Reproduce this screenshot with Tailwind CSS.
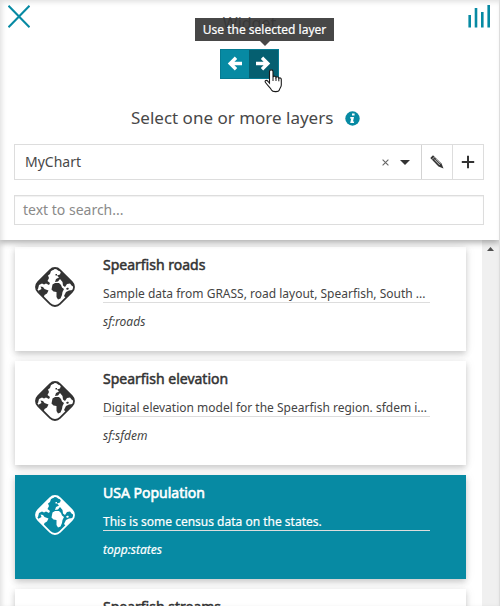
<!DOCTYPE html>
<html lang="en">
<head>
<meta charset="utf-8">
<title>Widget</title>
<script src="https://cdn.jsdelivr.net/npm/@tailwindcss/browser@4"></script>
</head>
<body class="relative h-[606px] w-[500px] overflow-hidden bg-white font-['Noto_Sans','Open_Sans',sans-serif] text-[#333]">
<svg class="absolute h-0 w-0">
  <clipPath id="diamond"><rect x="4.500" y="4.500" width="31" height="31" rx="7" transform="rotate(45 20 20)"/></clipPath>
  <symbol id="globe" viewBox="0 0 40 40">
    <rect x="4.500" y="4.500" width="31" height="31" rx="7" transform="rotate(45 20 20)" fill="none" stroke="currentColor" stroke-width="1.8"/>
    <g clip-path="url(#diamond)" fill="currentColor">
      <path d="M0 18 0 0H21L19 2.500 16 4 15 7 13 8.500 14 11 12.500 14 15 16 14 18 11 16.500 9 17.500 7 16.500 4 18 3 22 0 23Z"/>
      <path d="M20 0H40V20L37 19 35 16.500 32 17 30 20 28 18.500 27.500 15 25 12 23 14.500 20 15 21 12 24 10.500 22 8.500 25 7.500 26 4.500 23 3.500Z"/>
      <path d="M17.500 17.500 20 16 24 16 26 18 27 20.500 29 22 27.500 25 27 28 25.500 31.500 23 32.500 21.500 30 21.500 25 18.500 24.500 16.500 22.500Z"/>
      <path d="M3 24 6.500 22 5.500 19.500 8 20 9.500 22 13.500 23.500 12 26.500 9.500 28 8.500 31Z"/>
      <path d="M31 25 34 23.500 38 23 31 31 29 29Z"/>
      <path d="M20.500 7h1.500v1.500h-1.500zM31 21.500l2-1 1 1.500-2 1z"/>
    </g>
  </symbol>
</svg>
<header class="relative z-10 h-60 w-[499px] bg-white px-[14px] shadow-[0_3px_6px_rgba(0,0,0,.3)]">
  <div class="-mx-[6px] flex h-[49px] justify-between pt-[5px]">
    <svg class="h-6 w-[22px] text-[#078aa3]" viewBox="0 0 22 24"><path d="M.5 .8 21.5 22.2M21.5 .8 .5 22.2" stroke="currentColor" stroke-width="2.1"/></svg>
    <span class="ml-[2px] mt-[4px] text-[16px] leading-7 text-[#666]">Widget</span>
    <svg class="h-6 w-6 text-[#078aa3]" viewBox="0 0 24 24"><path d="M2.700 10v12.500M9 3v19.500M15.300 7v15.500M21.700 0v22.500" stroke="currentColor" stroke-width="2.6"/></svg>
  </div>
  <div class="ml-[206px] flex h-[30px] w-[59px] border border-[#067b92] text-white">
    <button class="flex w-7 items-center justify-center bg-[#078aa3]"><svg class="h-4 w-4" viewBox="0 0 16 16"><path d="M15 7.500H4M9 1.800 3.200 7.500l5.800 5.700" fill="none" stroke="currentColor" stroke-width="3.4"/></svg></button>
    <button class="flex w-[29px] items-center justify-center bg-[#055f70]"><svg class="h-4 w-4" viewBox="0 0 16 16"><path d="M0 7.500h11M6 1.800l5.800 5.700L6 13.200" fill="none" stroke="currentColor" stroke-width="3.4"/></svg></button>
  </div>
  <div class="mt-[25px] flex h-7 items-center pl-[117px]">
    <h1 class="whitespace-nowrap text-[17px] leading-7 text-[#484848]">Select one or more layers</h1>
    <svg class="ml-3 h-[15px] w-[15px]" viewBox="0 0 15 15"><circle cx="7.5" cy="7.5" r="7.2" fill="#078aa3"/><path d="M7 2.5h2.6v2H7zM5.400 6H9l-1 4.500h1.200l-.3 1.500H5.200l1-4.500H5z" fill="#fff"/></svg>
  </div>
  <div class="mt-3 flex h-9 w-[470px] border border-[#ddd]">
    <div class="flex w-[407px] items-center border-r border-[#d3d3d3] pl-[10px]">
      <span class="grow text-sm text-[#484848]">MyChart</span>
      <svg class="mr-[11px] h-[7px] w-[7px] text-[#666]" viewBox="0 0 7 7"><path d="M.6 .6 6.4 6.4M6.4 .6 .6 6.4" stroke="currentColor" stroke-width="1.1"/></svg>
      <svg class="mr-[11px] h-[5px] w-[10px]" viewBox="0 0 10 5"><path d="M0 0h10L5 5z" fill="#333"/></svg>
    </div>
    <button class="flex w-[31px] items-center justify-center border-r border-[#ddd]"><svg class="h-[14px] w-[14px]" viewBox="0 0 14 14"><path d="M.3 3 3 .3 11.500 8.500 13.500 13.500 8.500 11.500z" fill="#333"/><path d="M2 4.500 4.500 2M4.300 4.500l5.500 5.500M5.500 3.700l5 5" stroke="#fff" stroke-width=".7"/></svg></button>
    <button class="flex grow items-center justify-center"><svg class="h-[14px] w-[14px]" viewBox="0 0 14 14"><path d="M7 .8v12.400M.8 7h12.400" stroke="#333" stroke-width="2"/></svg></button>
  </div>
  <div class="mt-[15px] flex h-[30px] w-[470px] items-center border border-[#ddd] pl-2 text-sm text-[#8a8a8a] shadow-[inset_0_1px_1px_rgba(0,0,0,.06)]">text to search...</div>
  <div class="absolute left-[195px] top-[18px] flex h-[23px] w-[139px] items-center justify-center whitespace-nowrap bg-[#333]/90 text-xs text-white [-webkit-text-stroke:.2px_#fff]">Use the selected layer</div>
  <svg class="absolute left-[260px] top-[41px] h-[5px] w-[10px]" viewBox="0 0 10 5"><path d="M0 0h10L5 5z" fill="#474747"/></svg>
  <svg class="absolute left-[264px] top-[69px] h-[24px] w-[18px]" viewBox="0 0 18 24"><path d="M5.500 14V2.500C5.500.3 9 .3 9 2.500V8c.5-1.300 2.800-1 3 .5.7-1.200 2.700-.7 2.800.8 1-1 2.500-.2 2.500 1.200V16c0 2-1.500 3.200-1.800 4.500-.3 2.800-7 2.800-8 .5C6.500 18.500 3.500 16.500 1.500 13.500.2 11.500 2.500 10.500 4 12.300z" fill="#fff" stroke="#191919" stroke-width="1.1"/><path d="M9 8v4M12 8.500v3.500M14.800 9.300v3" stroke="#191919"/></svg>
</header>
<main class="flex h-[366px] w-[499px] overflow-hidden">
  <div class="flex w-[482px] flex-col gap-[10px] bg-white pl-[15px] pt-[7px]">
    <article class="flex h-[104px] w-[451px] shrink-0 bg-white pl-5 shadow-[0_3px_6px_rgba(0,0,0,.18),0_0_12px_rgba(0,0,0,.06)]">
      <svg class="mt-5 h-10 w-10"><use href="#globe"/></svg>
      <div class="ml-7 w-[327px] pt-[6px]">
        <h2 class="text-sm leading-6 [-webkit-text-stroke:.5px_currentColor]">Spearfish roads</h2>
        <p class="mt-2 h-[18px] whitespace-nowrap border-b border-[#ddd] text-xs leading-[17px] text-[#444]">Sample data from GRASS, road layout, Spearfish, South ...</p>
        <p class="mt-[10px] text-xs italic leading-[18px] text-[#444]">sf:roads</p>
      </div>
    </article>
    <article class="flex h-[104px] w-[451px] shrink-0 bg-white pl-5 shadow-[0_3px_6px_rgba(0,0,0,.18),0_0_12px_rgba(0,0,0,.06)]">
      <svg class="mt-5 h-10 w-10"><use href="#globe"/></svg>
      <div class="ml-7 w-[327px] pt-[6px]">
        <h2 class="text-sm leading-6 [-webkit-text-stroke:.5px_currentColor]">Spearfish elevation</h2>
        <p class="mt-2 h-[18px] whitespace-nowrap border-b border-[#ddd] text-xs leading-[17px] text-[#444]">Digital elevation model for the Spearfish region. sfdem i...</p>
        <p class="mt-[10px] text-xs italic leading-[18px] text-[#444]">sf:sfdem</p>
      </div>
    </article>
    <article class="flex h-[104px] w-[451px] shrink-0 bg-[#078aa3] pl-5 text-white shadow-[0_3px_6px_rgba(0,0,0,.18),0_0_12px_rgba(0,0,0,.06)]">
      <svg class="mt-5 h-10 w-10"><use href="#globe"/></svg>
      <div class="ml-7 w-[327px] pt-[6px]">
        <h2 class="text-sm leading-6 [-webkit-text-stroke:.6px_currentColor]">USA Population</h2>
        <p class="mt-2 h-[18px] whitespace-nowrap border-b border-[#ddd] text-xs leading-[17px] [-webkit-text-stroke:.2px_currentColor]">This is some census data on the states.</p>
        <p class="mt-[10px] text-xs italic leading-[18px] [-webkit-text-stroke:.2px_currentColor]">topp:states</p>
      </div>
    </article>
    <article class="flex h-[104px] w-[451px] shrink-0 bg-white pl-5 shadow-[0_3px_6px_rgba(0,0,0,.18),0_0_12px_rgba(0,0,0,.06)]">
      <div class="ml-[68px] pt-[6px]"><h2 class="text-sm leading-6 [-webkit-text-stroke:.5px_currentColor]">Spearfish streams</h2></div>
    </article>
  </div>
  <div class="flex w-[17px] justify-center bg-[#f0f0f0] pt-[7px]"><svg class="h-[4px] w-[7px]" viewBox="0 0 7 4"><path d="M3.500 0 7 4H0z" fill="#505050"/></svg></div>
</main>
<div class="pointer-events-none absolute inset-0 z-20 border-r border-[#ddd] shadow-[inset_2px_2px_5px_rgba(0,0,0,.12)]"></div>
</body>
</html>
